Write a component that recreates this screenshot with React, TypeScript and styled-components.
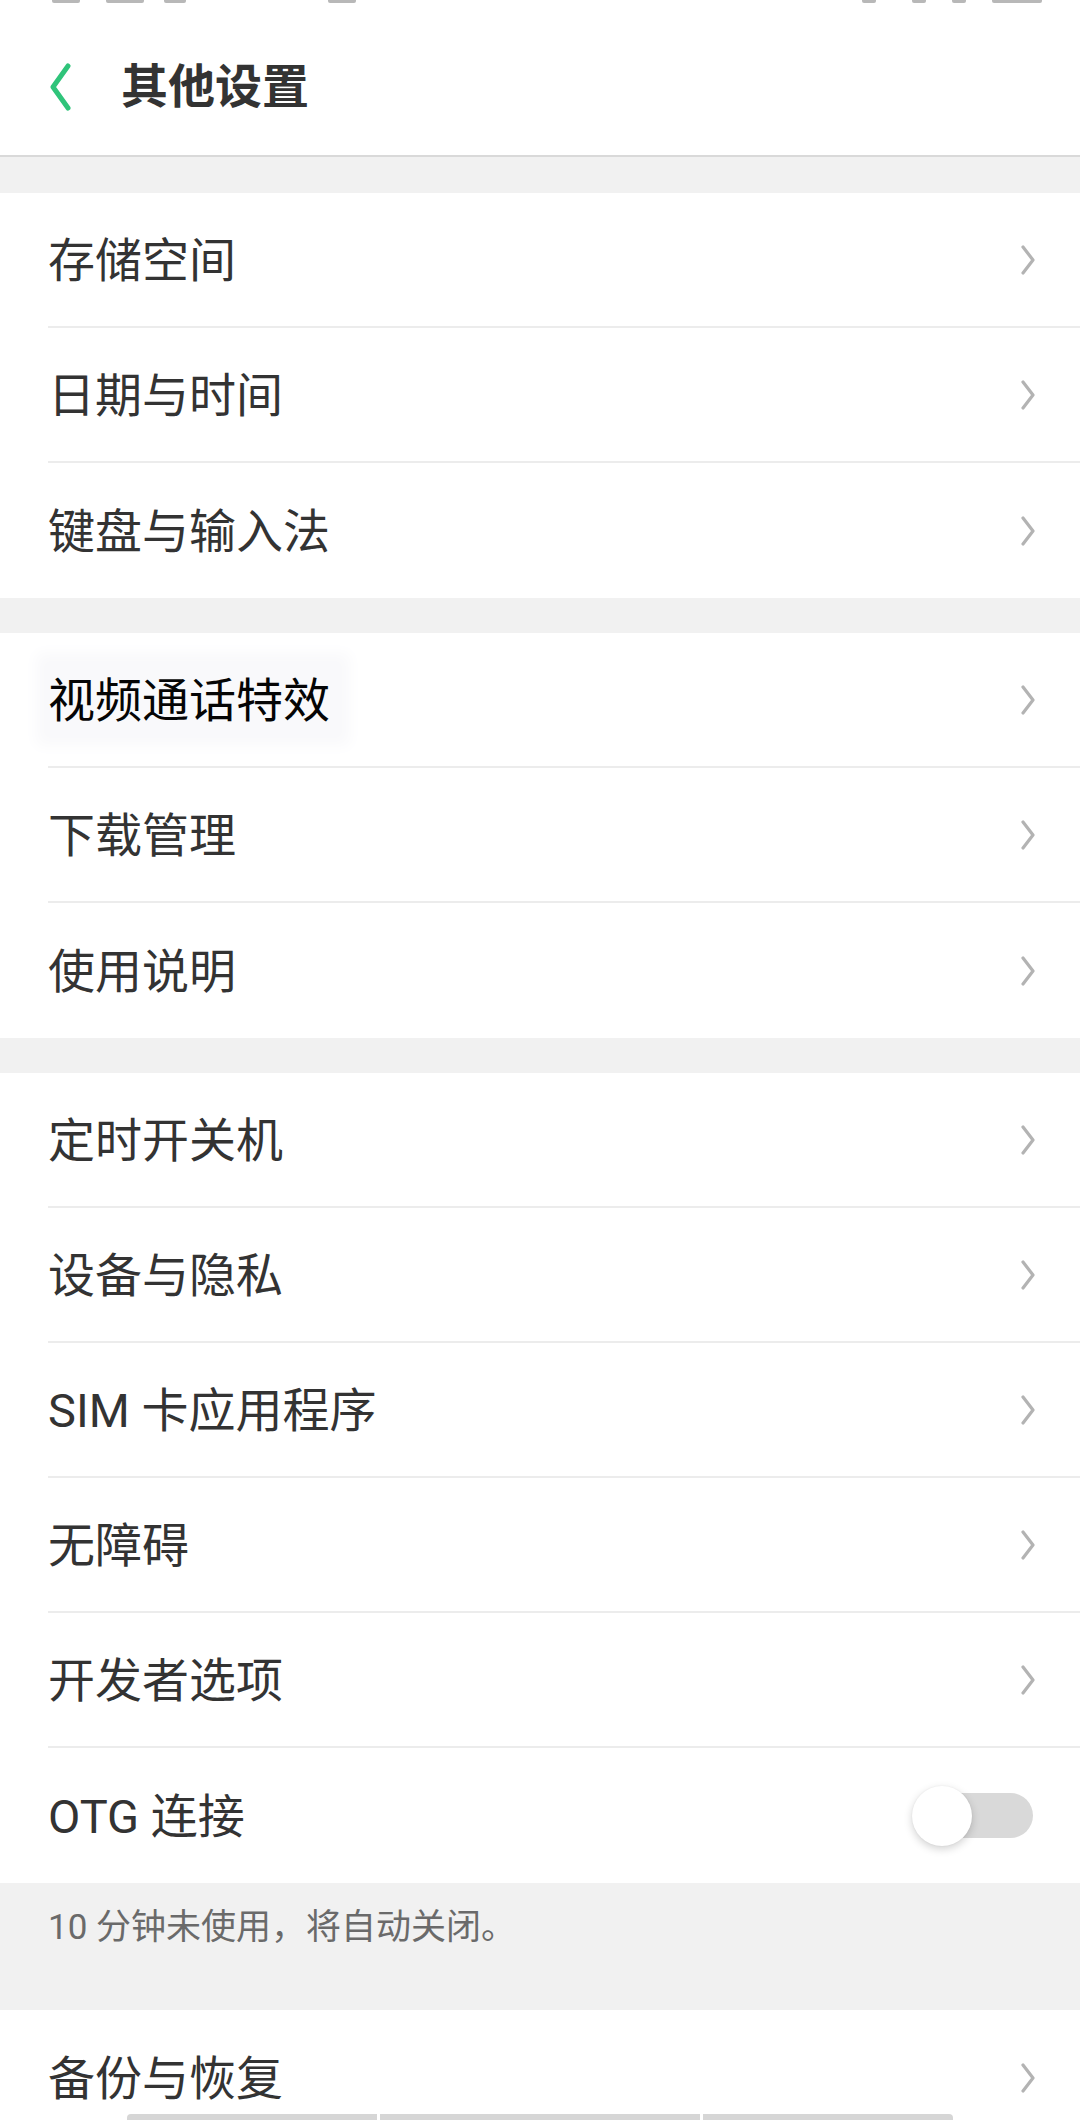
import React from "react";
import styled, { createGlobalStyle } from "styled-components";

const GlobalStyle = createGlobalStyle`
  html, body {
    margin: 0;
    padding: 0;
    background: #ffffff;
  }
  body {
    font-family: "Roboto", "Noto Sans CJK SC", "Noto Sans", sans-serif;
    -webkit-font-smoothing: antialiased;
  }
`;

const Page = styled.div`
  position: relative;
  width: 1080px;
  height: 2120px;
  overflow: hidden;
  background: #f1f1f1;
  display: flex;
  flex-direction: column;
`;

const StatusStrip = styled.div`
  height: 4px;
  flex: 0 0 4px;
  background: #ffffff;
  display: flex;
  align-items: flex-start;
`;

const StatusBit = styled.span<{ $w: number; $gap: number }>`
  display: block;
  width: ${(p) => p.$w}px;
  height: 3px;
  margin-left: ${(p) => p.$gap}px;
  background: #9a9a9a;
  border-radius: 0 0 2px 2px;
  opacity: 0.7;
`;

const Header = styled.header`
  box-sizing: border-box;
  height: 153px;
  flex: 0 0 153px;
  background: #ffffff;
  border-bottom: 2px solid #d9d9d9;
  display: flex;
  align-items: center;
  padding: 15px 0 0 48px;
`;

const BackButton = styled.div`
  width: 26px;
  height: 48px;
  display: flex;
  align-items: center;
  margin-right: 47px;
`;

const Title = styled.h1`
  margin: 0;
  font-size: 47px;
  line-height: 1.2;
  font-weight: 700;
  color: #333333;
`;

const Band = styled.div<{ $h: number }>`
  height: ${(p) => p.$h}px;
  flex: 0 0 ${(p) => p.$h}px;
  background: #f1f1f1;
`;

const Group = styled.section`
  background: #ffffff;
  display: flex;
  flex-direction: column;
`;

const Row = styled.div`
  padding-left: 48px;
  background: #ffffff;
`;

const RowInner = styled.div<{ $last: boolean }>`
  height: ${(p) => (p.$last ? 135 : 133)}px;
  display: flex;
  align-items: center;
  justify-content: space-between;
  padding-right: 46px;
  border-bottom: ${(p) => (p.$last ? "none" : "2px solid #ececec")};
`;

const Label = styled.span<{ $highlight?: boolean }>`
  font-size: 47px;
  line-height: 1.2;
  font-weight: 400;
  color: ${(p) => (p.$highlight ? "#050505" : "#333333")};
  background: ${(p) => (p.$highlight ? "#f9f9fb" : "transparent")};
  box-shadow: ${(p) => (p.$highlight ? "0 0 14px 12px #f9f9fb" : "none")};
  padding: ${(p) => (p.$highlight ? "8px 8px 4px 0" : "4px 0 0 0")};
`;

const Chevron = styled.svg`
  width: 16px;
  height: 30px;
  display: block;
  margin-right: -2px;
`;

const Switch = styled.div`
  position: relative;
  width: 121px;
  height: 60px;
  display: flex;
  align-items: center;
  margin-right: 1px;
`;

const Track = styled.div`
  margin-left: 19px;
  width: 102px;
  height: 45px;
  border-radius: 23px;
  background: #d9d9d9;
`;

const Knob = styled.div`
  position: absolute;
  left: 0;
  top: 0;
  width: 60px;
  height: 60px;
  border-radius: 50%;
  background: #ffffff;
  box-shadow: 0 3px 8px rgba(0, 0, 0, 0.18), 0 0 2px rgba(0, 0, 0, 0.06);
`;

const Footer = styled.div`
  height: 127px;
  flex: 0 0 127px;
  box-sizing: border-box;
  padding: 19px 0 0 48px;
  background: #f1f1f1;
`;

const FooterText = styled.p`
  margin: 0;
  font-size: 35px;
  line-height: 1.5;
  color: #6a6a6a;
`;

const BottomBars = styled.div`
  position: absolute;
  left: 127px;
  bottom: 0;
  height: 6px;
  display: flex;
  gap: 3px;
`;

const BarSeg = styled.div<{ $w: number; $pos: "first" | "mid" | "last" }>`
  width: ${(p) => p.$w}px;
  height: 6px;
  background: #d6d6d6;
  border-radius: ${(p) =>
    p.$pos === "first" ? "4px 0 0 0" : p.$pos === "last" ? "0 4px 0 0" : "0"};
`;

const ChevronIcon = () => (
  <Chevron viewBox="0 0 16 30">
    <polyline
      points="3,2 13,15 3,28"
      fill="none"
      stroke="#b3b3b3"
      strokeWidth="3.2"
      strokeLinecap="round"
      strokeLinejoin="round"
    />
  </Chevron>
);

type Item = { label: string; toggle?: boolean; highlight?: boolean };

const SettingsGroup = ({ items }: { items: Item[] }) => (
  <Group>
    {items.map((it, i) => (
      <Row key={it.label}>
        <RowInner $last={i === items.length - 1}>
          <Label $highlight={it.highlight}>{it.label}</Label>
          {it.toggle ? (
            <Switch>
              <Track />
              <Knob />
            </Switch>
          ) : (
            <ChevronIcon />
          )}
        </RowInner>
      </Row>
    ))}
  </Group>
);

export default function App() {
  return (
    <>
      <GlobalStyle />
      <Page>
        <StatusStrip>
          <StatusBit $w={28} $gap={52} />
          <StatusBit $w={38} $gap={26} />
          <StatusBit $w={22} $gap={20} />
          <StatusBit $w={28} $gap={142} />
          <StatusBit $w={14} $gap={506} />
          <StatusBit $w={14} $gap={36} />
          <StatusBit $w={14} $gap={26} />
          <StatusBit $w={50} $gap={26} />
        </StatusStrip>
        <Header>
          <BackButton>
            <svg width="26" height="48" viewBox="0 0 26 48">
              <polyline
                points="20,3 5,24 20,45"
                fill="none"
                stroke="#2fc47a"
                strokeWidth="5"
                strokeLinecap="round"
                strokeLinejoin="round"
              />
            </svg>
          </BackButton>
          <Title>其他设置</Title>
        </Header>
        <Band $h={36} />
        <SettingsGroup
          items={[
            { label: "存储空间" },
            { label: "日期与时间" },
            { label: "键盘与输入法" },
          ]}
        />
        <Band $h={35} />
        <SettingsGroup
          items={[
            { label: "视频通话特效", highlight: true },
            { label: "下载管理" },
            { label: "使用说明" },
          ]}
        />
        <Band $h={35} />
        <SettingsGroup
          items={[
            { label: "定时开关机" },
            { label: "设备与隐私" },
            { label: "SIM 卡应用程序" },
            { label: "无障碍" },
            { label: "开发者选项" },
            { label: "OTG 连接", toggle: true },
          ]}
        />
        <Footer>
          <FooterText>10 分钟未使用，将自动关闭。</FooterText>
        </Footer>
        <SettingsGroup items={[{ label: "备份与恢复" }]} />
        <BottomBars>
          <BarSeg $w={250} $pos="first" />
          <BarSeg $w={320} $pos="mid" />
          <BarSeg $w={250} $pos="last" />
        </BottomBars>
      </Page>
    </>
  );
}
